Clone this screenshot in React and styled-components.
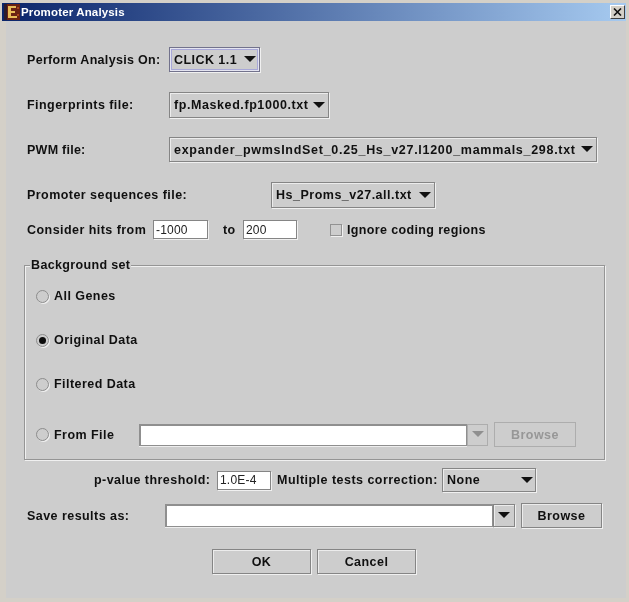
import React from "react";
import styled, { createGlobalStyle } from "styled-components";

const Global = createGlobalStyle`
  html, body { margin: 0; padding: 0; background: #d4d0c8; }
  * { box-sizing: border-box; }
`;

const Frame = styled.div`
  width: 629px;
  height: 602px;
  padding: 3px 3px 4px 2px;
  background: #d4d0c8;
  display: flex;
  flex-direction: column;
  font-family: "Liberation Sans", Arial, sans-serif;
  font-weight: 700;
  font-size: 12.5px;
  letter-spacing: 0.45px;
  color: #101010;
  filter: blur(0.4px);
`;

const TitleBar = styled.div`
  height: 18px;
  flex: none;
  display: flex;
  align-items: center;
  gap: 1px;
  padding: 0 1px 0 2px;
  background: linear-gradient(90deg, #0a246a 0%, #a6caf0 100%);
  color: #fff;
  font-size: 11.5px;
  letter-spacing: 0.15px;
`;

const TitleText = styled.span`
  flex: 1;
`;

const CloseButton = styled.div`
  width: 15px;
  height: 14px;
  background: #d4d0c8;
  border: 1px solid;
  border-color: #fff #404040 #404040 #fff;
  display: flex;
  align-items: center;
  justify-content: center;
`;

const Body = styled.div`
  flex: 1;
  background: #cdcdcd;
  margin-left: 4px;
  padding: 26px 0 0 21px;
  display: flex;
  flex-direction: column;
`;

const Row = styled.div`
  display: flex;
  align-items: center;
  flex: none;
  height: ${(p) => p.$h}px;
  margin-top: ${(p) => p.$top}px;
`;

const Label = styled.span`
  flex: none;
  width: ${(p) => (p.$w ? `${p.$w}px` : "auto")};
  margin-left: ${(p) => p.$ml || 0}px;
  letter-spacing: ${(p) => p.$track ?? 0.45}px;
  white-space: nowrap;
`;

const Combo = styled.div`
  flex: none;
  width: ${(p) => p.$w}px;
  height: 100%;
  display: flex;
  align-items: center;
  justify-content: space-between;
  padding: 0 ${(p) => p.$pr || 3}px 0 4px;
  background: #cdcdcd;
  border: 1px solid #858585;
  box-shadow: 1px 1px 0 #f0f0f0, inset 1px 1px 0 #ececec;
  letter-spacing: ${(p) => p.$track ?? 0.5}px;
  white-space: nowrap;
  ${(p) => p.$focus && `
    border: 1px solid #72728c;
    box-shadow: 1px 1px 0 #f0f0f0, inset 0 0 0 1px #e4e4f0, inset 0 0 0 2px #a8a8d8;
  `}
`;

const Arrow = styled.span`
  flex: none;
  width: 0;
  height: 0;
  border-left: 6px solid transparent;
  border-right: 6px solid transparent;
  border-top: 6px solid ${(p) => (p.$off ? "#8f8f8f" : "#111")};
  margin-top: -1px;
`;

const TextField = styled.div`
  flex: none;
  width: ${(p) => p.$w}px;
  height: ${(p) => p.$h || 19}px;
  display: flex;
  align-items: center;
  padding-left: 2px;
  background: #fff;
  border: 1px solid #858585;
  box-shadow: 1px 1px 0 #f0f0f0;
  font-weight: 400;
  font-size: 12px;
  letter-spacing: 0.2px;
  color: #222;
`;

const EditableField = styled(TextField)`
  border-width: 2px 1px 1px 2px;
  border-color: #8f8f8f;
  box-shadow: 0 1px 0 #eee;
`;

const ComboButton = styled.div`
  flex: none;
  width: ${(p) => p.$w}px;
  height: ${(p) => p.$h}px;
  display: flex;
  align-items: center;
  justify-content: center;
  background: #cdcdcd;
  border: 1px solid ${(p) => (p.$off ? "#adadad" : "#858585")};
  box-shadow: ${(p) => (p.$off ? "none" : "1px 1px 0 #f0f0f0, inset 1px 1px 0 #ececec")};
`;

const Button = styled.div`
  flex: none;
  width: ${(p) => p.$w}px;
  height: 100%;
  margin-left: ${(p) => p.$ml || 0}px;
  display: flex;
  align-items: center;
  justify-content: center;
  background: #cdcdcd;
  border: 1px solid ${(p) => (p.$off ? "#adadad" : "#858585")};
  box-shadow: ${(p) => (p.$off ? "none" : "1px 1px 0 #f0f0f0, inset 1px 1px 0 #ececec")};
  color: ${(p) => (p.$off ? "#979797" : "inherit")};
`;

const Check = styled.span`
  flex: none;
  width: 12px;
  height: 12px;
  margin-left: 33px;
  margin-right: 5px;
  border: 1px solid #929292;
  box-shadow: 1px 1px 0 #f0f0f0;
  background: #cdcdcd;
`;

const Group = styled.div`
  position: relative;
  flex: none;
  width: 581px;
  height: 195px;
  margin: 26px 0 0 -3px;
  padding: 19px 0 0 11px;
  border: 1px solid #959595;
  box-shadow: 1px 1px 0 #f0f0f0, inset 1px 1px 0 #f0f0f0;
`;

const Legend = styled.span`
  position: absolute;
  left: 5px;
  top: -8px;
  padding: 0 1px;
  line-height: 15px;
  letter-spacing: 0.35px;
  background: #cdcdcd;
`;

const Radio = styled.span`
  flex: none;
  position: relative;
  width: 13px;
  height: 13px;
  margin-right: 5px;
  border-radius: 50%;
  border: 1px solid #8c8c8c;
  box-shadow: 1px 1px 0 #f0f0f0;
  background: #cdcdcd;
  ${(p) => p.$on && `
    &::after {
      content: "";
      position: absolute;
      left: 2px;
      top: 2px;
      width: 7px;
      height: 7px;
      border-radius: 50%;
      background: #0c0c0c;
    }
  `}
`;

const Logo = () => (
  <svg width="16" height="16" viewBox="0 0 16 16" aria-hidden="true">
    <rect width="16" height="16" fill="#6a2212" />
    <rect x="0" y="0" width="3" height="16" fill="#2d1c2c" />
    <rect x="13" y="3" width="2" height="2" fill="#a8451c" />
    <rect x="13" y="10" width="2" height="2" fill="#a8451c" />
    <path d="M4 2h8v2H7v3h4v2H7v3h6v2H4z" fill="#e8bc58" />
  </svg>
);

const CloseX = () => (
  <svg width="9" height="8" viewBox="0 0 9 8" aria-hidden="true">
    <path d="M1 0.5l7 7M8 0.5l-7 7" stroke="#111" strokeWidth="1.6" fill="none" />
  </svg>
);

export default function App() {
  return (
    <>
      <Global />
      <Frame>
        <TitleBar>
          <Logo />
          <TitleText>Promoter Analysis</TitleText>
          <CloseButton><CloseX /></CloseButton>
        </TitleBar>
        <Body>
          <Row $h={25} $top={0}>
            <Label $w={142} $track={0.3}>Perform Analysis On:</Label>
            <Combo $w={91} $focus $track={0.45}>CLICK 1.1<Arrow /></Combo>
          </Row>
          <Row $h={26} $top={20}>
            <Label $w={142}>Fingerprints file:</Label>
            <Combo $w={160} $track={0.58}>fp.Masked.fp1000.txt<Arrow /></Combo>
          </Row>
          <Row $h={25} $top={19}>
            <Label $w={142} $track={0.25}>PWM file:</Label>
            <Combo $w={428} $track={0.71}>expander_pwmsIndSet_0.25_Hs_v27.l1200_mammals_298.txt<Arrow /></Combo>
          </Row>
          <Row $h={26} $top={20}>
            <Label $w={244}>Promoter sequences file:</Label>
            <Combo $w={164}>Hs_Proms_v27.all.txt<Arrow /></Combo>
          </Row>
          <Row $h={19} $top={12}>
            <Label $w={126}>Consider hits from</Label>
            <TextField $w={55}>-1000</TextField>
            <Label $ml={15} $w={20}>to</Label>
            <TextField $w={54}>200</TextField>
            <Check />
            <Label $track={0.36}>Ignore coding regions</Label>
          </Row>
          <Group>
            <Legend>Background set</Legend>
            <Row $h={22} $top={0}><Radio /><Label>All Genes</Label></Row>
            <Row $h={22} $top={22}><Radio $on /><Label>Original Data</Label></Row>
            <Row $h={22} $top={22}><Radio /><Label>Filtered Data</Label></Row>
            <Row $h={25} $top={27}>
              <Radio />
              <Label $w={85}>From File</Label>
              <EditableField $w={328} $h={22} />
              <ComboButton $w={21} $h={22} $off><Arrow $off /></ComboButton>
              <Button $w={82} $ml={6} $off>Browse</Button>
            </Row>
          </Group>
          <Row $h={24} $top={8}>
            <Label $ml={67} $w={123}>p-value threshold:</Label>
            <TextField $w={54}>1.0E-4</TextField>
            <Label $ml={6} $w={165} $track={0.47}>Multiple tests correction:</Label>
            <Combo $w={94} $pr={2}>None<Arrow /></Combo>
          </Row>
          <Row $h={25} $top={11}>
            <Label $w={138}>Save results as:</Label>
            <EditableField $w={328} $h={23} />
            <ComboButton $w={22} $h={23}><Arrow /></ComboButton>
            <Button $w={81} $ml={6}>Browse</Button>
          </Row>
          <Row $h={25} $top={21}>
            <Button $w={99} $ml={185}>OK</Button>
            <Button $w={99} $ml={6}>Cancel</Button>
          </Row>
        </Body>
      </Frame>
    </>
  );
}
